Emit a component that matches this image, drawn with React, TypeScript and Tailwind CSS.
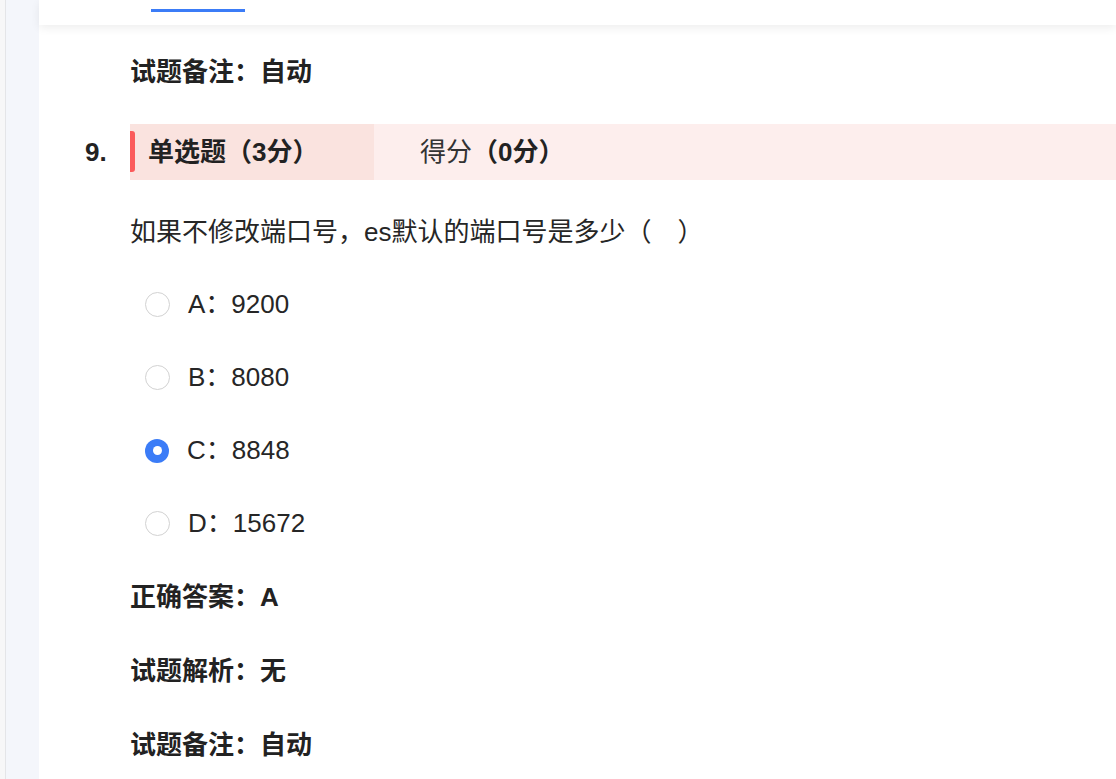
import React from "react";

const font = { fontFamily: '"Liberation Sans", "Noto Sans CJK SC", sans-serif' };

function Radio({ checked }: { checked?: boolean }) {
  if (checked) {
    return (
      <span className="flex h-[24px] w-[24px] items-center justify-center rounded-full bg-[#3b7cf7]">
        <span className="h-[9px] w-[9px] rounded-full bg-white" />
      </span>
    );
  }
  return <span className="block h-[25px] w-[25px] rounded-full border border-[#d2d2d2] bg-white" />;
}

const options = [
  { k: "A", v: "9200" },
  { k: "B", v: "8080" },
  { k: "C", v: "8848", checked: true },
  { k: "D", v: "15672" },
];

export default function App() {
  return (
    <div className="flex h-[779px] w-[1116px] overflow-hidden bg-white text-[#222]" style={font}>
      <div className="flex h-full w-[39px] shrink-0">
        <div className="h-full w-[5px] bg-[#f7f7f8]" />
        <div className="h-full w-[1px] bg-[#e4e5e8]" />
        <div className="h-full flex-1 bg-[#f4f6fb]" />
      </div>
      <div className="flex min-w-0 flex-1 flex-col">
        <div className="relative z-10 h-[25px] shrink-0 bg-white pl-[112px] pt-[9px] shadow-[0_3px_10px_rgba(0,0,0,0.07)]">
          <div className="h-[3px] w-[94px] bg-[#3b7cf7]" />
        </div>
        <div className="flex flex-col pl-[91px] text-[26px]">
          <div className="mt-[10px] flex h-[74px] items-center font-bold text-[#222]">试题备注：自动</div>
          <div className="relative -ml-[45px] mt-[15px] flex h-[56px] items-stretch">
            <div className="flex w-[45px] items-center font-bold text-[#222]">9.</div>
            <div className="flex flex-1">
              <div className="relative flex w-[244px] items-center bg-[#fae3df] pl-[18px]">
                <span className="absolute left-0 top-[7px] h-[41px] w-[5px] rounded-r-[3px] bg-[#fb5b5b]" />
                <span className="font-bold">单选题（3分）</span>
              </div>
              <div className="flex flex-1 items-center bg-[#fdeeed] pl-[46px]">
                <span className="text-[#333]">得分</span>
                <span className="font-bold">（0分）</span>
              </div>
            </div>
          </div>
          <div className="mt-[16px] flex h-[72px] items-center text-[#262626]">如果不修改端口号，es默认的端口号是多少（　）</div>
          <div className="flex flex-col pl-[15px]">
            {options.map((o) => (
              <div key={o.k} className="flex h-[73px] items-center text-[#262626]">
                <Radio checked={o.checked} />
                <span className="ml-[18px]">
                  {o.k}：{o.v}
                </span>
              </div>
            ))}
          </div>
          <div className="flex h-[74px] items-center font-bold">正确答案：A</div>
          <div className="flex h-[74px] items-center font-bold">试题解析：无</div>
          <div className="flex h-[74px] items-center font-bold">试题备注：自动</div>
        </div>
      </div>
    </div>
  );
}
